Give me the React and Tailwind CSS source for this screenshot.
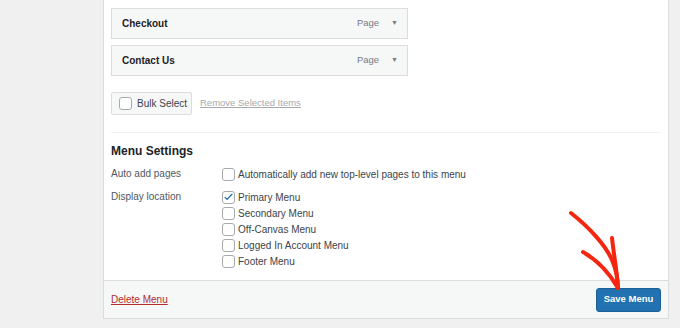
import React from "react";

const font = { fontFamily: '"Liberation Sans", Arial, sans-serif' };

function Box({ checked }) {
  return (
    <span className="w-[13px] h-[13px] rounded-[3px] border border-[#a7aaad] bg-white flex items-center justify-center shrink-0">
      {checked && (
        <svg viewBox="0 0 16 16" className="w-[12px] h-[12px]">
          <path d="M3 8.5l3 3 7-7.5" fill="none" stroke="#2271b1" strokeWidth="1.9" strokeLinecap="round" strokeLinejoin="round" />
        </svg>
      )}
    </span>
  );
}

function MenuItem({ title }) {
  return (
    <div className="w-[297px] h-[31px] bg-[#f6f7f7] border border-[#dcdcde] flex items-center pl-[10px] pr-[9px]">
      <span className="text-[10px] font-bold text-[#1d2327]">{title}</span>
      <span className="ml-auto text-[9.5px] text-[#787c82]">Page</span>
      <span className="ml-[12px] text-[7px] text-[#787c82]">▼</span>
    </div>
  );
}

const locations = [
  ["Primary Menu", true],
  ["Secondary Menu", false],
  ["Off-Canvas Menu", false],
  ["Logged In Account Menu", false],
  ["Footer Menu", false],
];

export default function App() {
  return (
    <div className="w-[680px] h-[328px] bg-[#f0f0f1] relative overflow-hidden" style={font}>
      <div className="ml-[103px] w-[566px] h-[319px] bg-white border-x border-b border-[#dcdcde] flex flex-col">
        <div className="px-[7px] pt-[8px] flex-1">
          <div className="flex flex-col gap-[6px]">
            <MenuItem title="Checkout" />
            <MenuItem title="Contact Us" />
          </div>
          <div className="mt-[16px] flex items-center gap-[8px]">
            <div className="h-[23px] w-[81px] bg-[#f6f7f7] border border-[#dcdcde] rounded-[2px] flex items-center pl-[7px] gap-[5px]">
              <Box />
              <span className="text-[10px] text-[#3c434a] whitespace-nowrap">Bulk Select</span>
            </div>
            <span className="text-[9.5px] text-[#a7aaad] underline">Remove Selected Items</span>
          </div>
          <div className="mt-[17px] border-t border-[#f0f0f1]" />
          <h3 className="mt-[9px] text-[12px] font-bold text-[#1d2327] leading-[18px]">Menu Settings</h3>
          <div className="mt-[6px] flex text-[10px] text-[#3c434a]">
            <div className="w-[111px] text-[#50575e] leading-[16px]">Auto add pages</div>
            <div className="flex items-center gap-[3px] h-[16px]">
              <Box />
              <span>Automatically add new top-level pages to this menu</span>
            </div>
          </div>
          <div className="mt-[7px] flex text-[10px] text-[#3c434a]">
            <div className="w-[111px] text-[#50575e] leading-[16px]">Display location</div>
            <div className="flex flex-col">
              {locations.map(([label, checked]) => (
                <div key={label} className="flex items-center gap-[3px] h-[16px]">
                  <Box checked={checked} />
                  <span>{label}</span>
                </div>
              ))}
            </div>
          </div>
        </div>
        <div className="h-[38px] bg-[#f6f7f7] border-t border-[#dcdcde] flex items-center justify-between px-[7px]">
          <span className="text-[10px] text-[#b32d2e] underline">Delete Menu</span>
          <button className="h-[24px] w-[65px] bg-[#2271b1] border border-[#1a5f96] rounded-[3px] text-white text-[9.5px] font-bold">
            Save Menu
          </button>
        </div>
      </div>
      <svg className="absolute left-0 top-0 pointer-events-none" width="680" height="328" viewBox="0 0 680 328">
        <g fill="none" stroke="#f5260f" strokeWidth="4" strokeLinecap="round" strokeLinejoin="round">
          <path d="M571 213 C590 228 606 246 612 260 C617 272 618 280 618 288" />
          <path d="M583 252 C597 260 610 274 618 288" />
          <path d="M612 238 C614 256 617 272 618 288" />
        </g>
      </svg>
    </div>
  );
}
